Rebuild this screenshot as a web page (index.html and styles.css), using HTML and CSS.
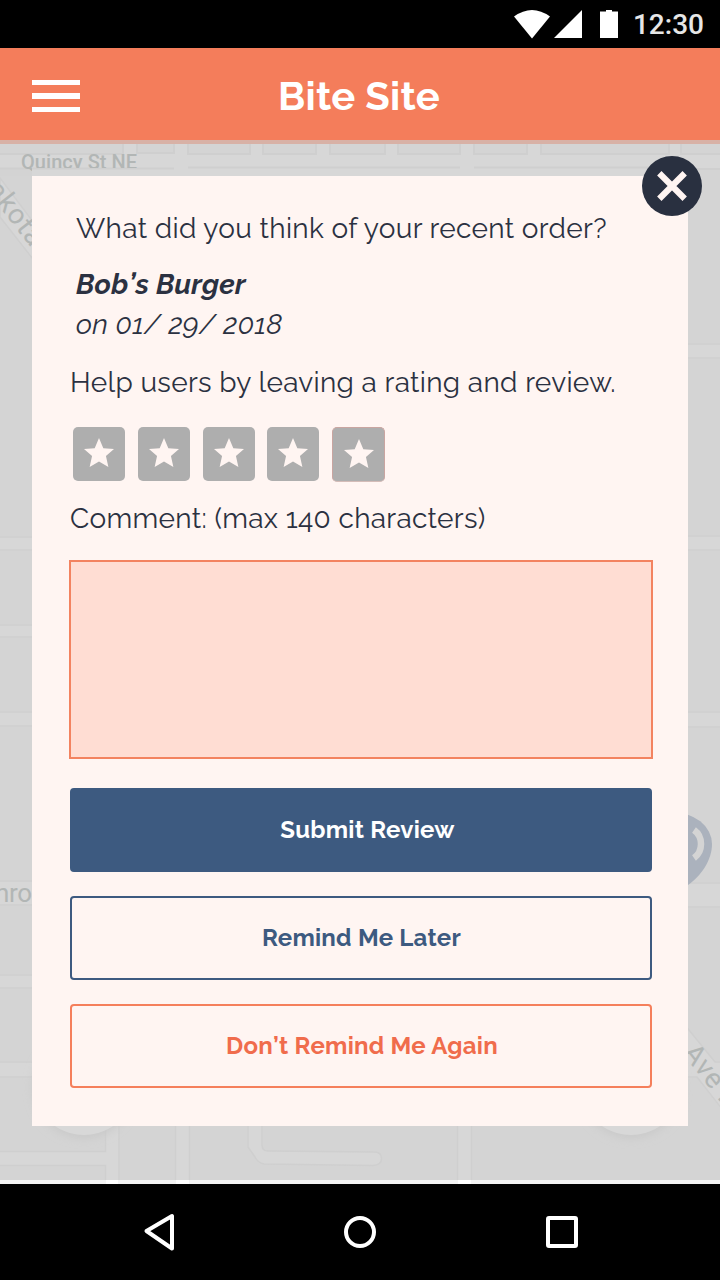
FILE: index.html
```html
<!DOCTYPE html>
<html lang="en">
<head>
<meta charset="utf-8">
<title>Bite Site</title>
<link rel="stylesheet" href="styles.css">
</head>
<body>
<div class="phone">
  <div class="status">
    <svg width="106" height="30" viewBox="0 0 106 30" fill="#fff">
      <path d="M0 6.500Q18 -6.500 36 6.500L18 28.500z"/>
      <path d="M40 28L68 0V28z"/>
      <path d="M86 1.500h6V0h6v1.500h6V28H86z"/>
    </svg>
    <span class="clock">12:30</span>
  </div>
  <header class="bar">
    <button class="menu" aria-label="Menu"><i></i><i></i><i></i></button>
    <h1 class="brand">Bite Site</h1>
  </header>
  <main class="stage">
    <svg class="map" width="720" height="1044" viewBox="0 140 720 1044">
      <defs>
        <filter id="soft" x="-30%" y="-30%" width="160%" height="160%"><feGaussianBlur stdDeviation="5"/></filter>
        <clipPath id="street"><path d="M0 140H720V168H32V176H0z"/></clipPath>
      </defs>
      <rect y="140" width="720" height="1044" fill="#d4d4d4"/>
      <path d="M0 154H720V176H0z" fill="#d7d7d7"/>
      <path d="M0 169H32V176H0z" fill="#d3d3d3"/>
      <path d="M688 169H720V176H688z" fill="#d4d4d4"/>
      <g fill="#d7d7d7">
        <path d="M124 140h13v16h-13zM174 140h14v16h-14zM250 140h13v16h-13zM316 140h14v16h-14zM385 140h13v16h-13zM460 140h14v16h-14zM527 140h14v16h-14zM669 140h12v16h-12z"/>
      </g>
      <path d="M0 154H123V140M137 140V153H174V140M188 140V154H250V140M263 140V154H316V140M330 140V154H385V140M398 140V154H460V140M474 140V154H527V140M541 140V154H669V140M681 140V154H720M0 168.500H174M188 167.500H460M474 167.500H670M681 169H720" class="edge"/>
      <path d="M0 178L40 231V268L0 217z" class="road"/>
      <g class="road">
        <path d="M-4 537H40V550H-4zM-4 625H40V637H-4zM-4 712H40V726H-4zM-4 881H40V905H-4zM-4 975H40V988H-4zM-4 1062H40V1077H-4z"/>
        <path d="M680 344H724V358H680zM680 536H724V550H680zM680 712H724V727H680zM680 883H724V907H680z"/>
        <path d="M680 1019L715 1062H726V1114L697 1077H680z"/>
        <path d="M-4 1151.500H105.500V1120H119V1190H105.500V1165.500H-4zM175.500 1120h14v70h-14zM457.500 1120h14v70h-14z"/>
        <path d="M248 1120V1147L255 1157Q258 1163 264 1164L373 1165.500Q381.500 1165 381.500 1158.500Q381.500 1152 374 1152L268 1151Q262 1151 262 1145V1120z"/>
      </g>
      <path d="M0 1180H720V1184H0z" fill="#f4f4f4"/>
      <path d="M106 1180h12v4h-12zM176 1180h13v4h-13zM458 1180h13v4h-13z" fill="#fff"/>
      <text class="label street" x="21" y="168.500" clip-path="url(#street)">Quincy St NE</text>
      <text class="label ave" transform="translate(-14 190) rotate(52)">akota</text>
      <text class="label" x="-5" y="902" textLength="37">nro</text>
      <text class="label ave" transform="translate(682 1053) rotate(52)">Ave N</text>
      <path d="M672 812A40 32 0 0 1 712 844C712 860 701 876 688 885L664 850z" fill="#abb2bd"/>
      <path d="M694 830Q701 835 701 844Q701 853 694 858" fill="none" stroke="#d4d4d4" stroke-width="6.500"/>
      <g fill="#c9c9c9" filter="url(#soft)"><circle cx="84" cy="1087" r="51"/><circle cx="631" cy="1087" r="51"/></g>
      <g fill="#d8d8d8"><circle cx="84" cy="1083" r="52"/><circle cx="631" cy="1083" r="52"/></g>
      <path d="M0 140H720V144H0z" fill="#d8b1a6"/>
    </svg>
    <section class="dialog">
      <button class="close" aria-label="Close">
        <svg width="60" height="60" viewBox="0 0 60 60"><circle cx="30" cy="30" r="30" fill="#293040"/><path d="M19.500 19.500L40.500 40.500M40.500 19.500L19.500 40.500" stroke="#fff5f2" stroke-width="6.200" stroke-linecap="square"/></svg>
      </button>
      <p class="copy question">What did you think of your recent order?</p>
      <p class="place">Bob<span class="tick">’</span>s Burger</p>
      <p class="date">on 01/ 29/ 2018</p>
      <p class="copy help">Help users by leaving a rating and review.</p>
      <div class="stars">
        <span class="star"><svg viewBox="0 0 32 32"><path d="M16 0l4.600 10.800L32 11.600 23.400 19.300 26 31 16 25 6 31 8.600 19.300 0 11.600l11.400-.8z"/></svg></span>
        <span class="star"><svg viewBox="0 0 32 32"><path d="M16 0l4.600 10.800L32 11.600 23.400 19.300 26 31 16 25 6 31 8.600 19.300 0 11.600l11.400-.8z"/></svg></span>
        <span class="star"><svg viewBox="0 0 32 32"><path d="M16 0l4.600 10.800L32 11.600 23.400 19.300 26 31 16 25 6 31 8.600 19.300 0 11.600l11.400-.8z"/></svg></span>
        <span class="star"><svg viewBox="0 0 32 32"><path d="M16 0l4.600 10.800L32 11.600 23.400 19.300 26 31 16 25 6 31 8.600 19.300 0 11.600l11.400-.8z"/></svg></span>
        <span class="star last"><svg viewBox="0 0 32 32"><path d="M16 0l4.600 10.800L32 11.600 23.400 19.300 26 31 16 25 6 31 8.600 19.300 0 11.600l11.400-.8z"/></svg></span>
      </div>
      <p class="copy comment">Comment: (max 140 characters)</p>
      <textarea class="field" aria-label="Comment"></textarea>
      <div class="actions">
        <button class="btn submit"><span>Submit Review</span></button>
        <button class="btn later"><span>Remind Me Later</span></button>
        <button class="btn never"><span>Don<span class="tick">’</span>t Remind Me Again</span></button>
      </div>
    </section>
  </main>
  <nav class="nav">
    <svg width="720" height="96" viewBox="0 0 720 96" fill="none" stroke="#fff" stroke-width="4" stroke-linejoin="round">
      <path d="M172 32V64.500L146.500 47z"/>
      <circle cx="360" cy="48" r="14"/>
      <rect x="548" y="34" width="28" height="28" rx="1"/>
    </svg>
  </nav>
</div>
</body>
</html>
```

FILE: styles.css
```css
* { box-sizing: border-box; }
body { margin: 0; font-family: Raleway, Lato, sans-serif; color: #2b3141; }
p, h1 { margin: 0; white-space: nowrap; }
button { font: inherit; padding: 0; border: 0; background: none; }
.phone { width: 720px; height: 1280px; display: flex; flex-direction: column; overflow: hidden; }
.status { height: 48px; background: #000; display: flex; align-items: center; justify-content: flex-end; gap: 13px; padding-right: 16px; }
.status svg { margin-top: 2px; }
.clock { font: 500 28px/48px Roboto, sans-serif; color: #e6e6e6; padding-top: 1px; height: 48px; }
.bar { height: 92px; background: #f47d5b; display: grid; grid-template-columns: 80px 1fr 80px; align-items: center; }
.menu { display: grid; gap: 8px; margin: 4px 0 0 32px; width: 48px; height: 32px; grid-template-rows: repeat(3, 5.300px); }
.menu i { background: #fff; }
.brand { text-align: center; color: #fff; font-size: 40px; line-height: 90px; height: 92px; font-weight: 700; padding: 3px 2px 0 0; letter-spacing: .23px; }
.stage { position: relative; height: 1044px; padding: 36px 32px 0; }
.map { position: absolute; left: 0; top: 0; }
.edge { fill: none; stroke: #cfcfcf; stroke-width: 2; }
.road { fill: #d7d7d7; stroke: #cfcfcf; stroke-width: 1.500; }
.label { font: 26px Roboto, sans-serif; fill: #b2b6b5; }
.street { font-size: 20px; font-weight: 500; letter-spacing: .05px; }
.ave { font-size: 28px; letter-spacing: .9px; }
.dialog { position: relative; height: 950px; background: #fff5f2; padding: 32px 35px 38px 38px; display: flex; flex-direction: column; align-items: flex-start; }
.close { position: absolute; right: -14px; top: -20px; width: 60px; height: 60px; }
.close svg { display: block; }
.copy { font-size: 28px; line-height: 42px; letter-spacing: .3px; }
.question { margin-left: 6px; }
.place { font-size: 28px; line-height: 40px; font-weight: 700; font-style: italic; letter-spacing: .22px; margin: 15px 0 0 6px; }
.date { font-size: 28px; line-height: 40px; font-style: italic; letter-spacing: .28px; margin-left: 6px; font-variant-numeric: oldstyle-nums; }
.place .tick { letter-spacing: .3px; }
.help { margin-top: 17px; }
.stars { display: flex; gap: 12.800px; margin: 23px 0 0 3px; height: 55px; }
.star { width: 52px; height: 53.500px; border-radius: 5px; background: #aeaeae; display: grid; place-items: center; }
.star svg { width: 30px; height: 30px; fill: #fff5f2; margin-bottom: 2px; }
.star.last { width: 53px; height: 55px; border: 1px solid #c9a5a1; border-bottom-color: #d4bcb8; }
.comment { margin-top: 16px; font-variant-numeric: oldstyle-nums; }
.field { display: block; margin: 20px 0 0 -1px; width: 584px; height: 199px; border: 2px solid #f38360; background: #ffddd3; resize: none; padding: 12px; }
.actions { width: 582px; display: grid; gap: 24px; margin-top: 29px; }
.btn { height: 84px; border-radius: 4px; border: 2px solid #3d5a80; font-size: 24px; font-weight: 700; color: #3d5a80; letter-spacing: .26px; padding: 0 0 2px 1px; }
.submit { background: #3d5a80; color: #fff; padding-left: 13px; }
.never { border-color: #f57f5b; color: #f06c4c; padding-left: 2px; }
.never .tick { letter-spacing: .3px; }
.nav { height: 96px; background: #000; }
.nav svg { display: block; }
```
